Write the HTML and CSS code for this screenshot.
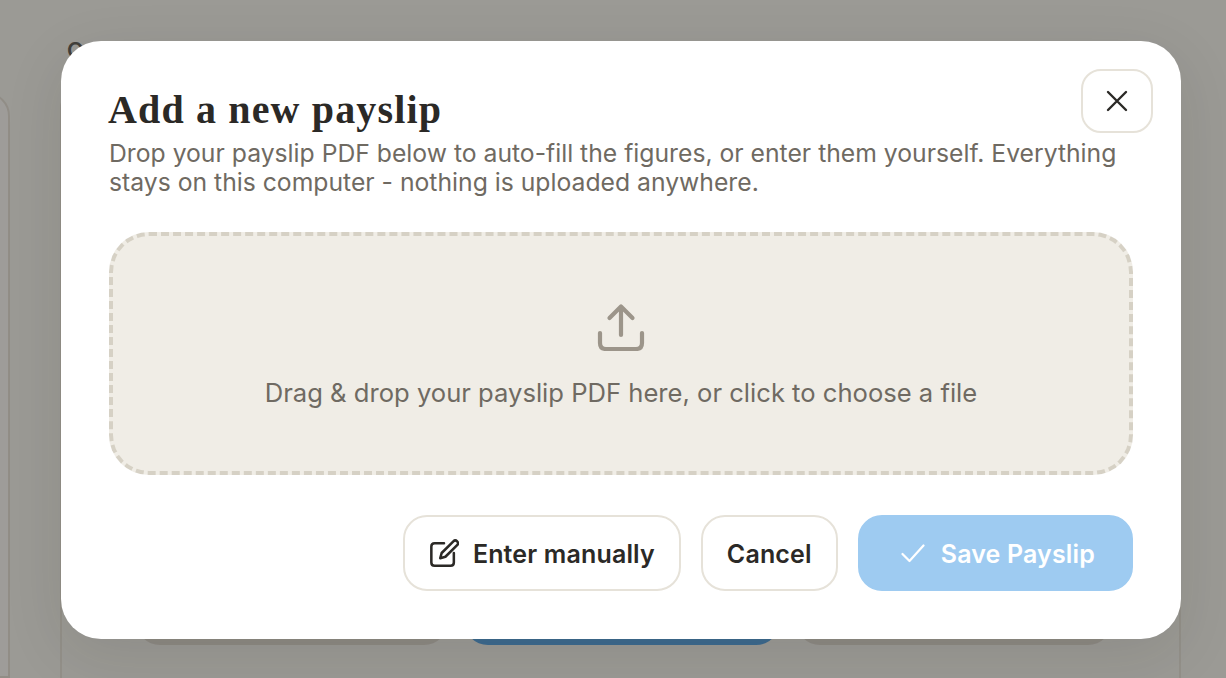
FILE: index.html
```html
<!DOCTYPE html>
<html lang="en">
<head>
<meta charset="utf-8">
<title>Add a new payslip</title>
<link rel="stylesheet" href="styles.css">
</head>
<body>
<div class="page" aria-hidden="true">
  <div class="side-card"></div>
  <div class="main">
    <div class="eyebrow">O</div>
    <div class="main-card">
      <div class="under-actions">
        <div class="under-btn"></div>
        <div class="under-btn primary"></div>
        <div class="under-btn"></div>
      </div>
    </div>
  </div>
</div>
<div class="overlay">
  <section class="modal">
    <button class="close" aria-label="Close">
      <svg width="24" height="24" viewBox="0 0 24 24" fill="none" stroke="#2b2926" stroke-width="2.4" stroke-linecap="round"><path d="M3 3 L21 21 M21 3 L3 21"/></svg>
    </button>
    <h1 class="title">Add a new payslip</h1>
    <p class="lead">Drop your payslip PDF below to auto-fill the figures, or enter them yourself. Everything stays on this computer - nothing is uploaded anywhere.</p>
    <div class="drop">
      <svg class="drop-icon" width="48" height="48" viewBox="0 0 48 48" fill="none" stroke="#9c958a" stroke-width="4.2" stroke-linecap="round" stroke-linejoin="round"><path d="M24 32 V4 M12.500 15 L24 3.500 L35.500 15"/><path d="M3 30 V40 Q3 46 9 46 H39 Q45 46 45 40 V30"/></svg>
      <p class="drop-text">Drag &amp; drop your payslip PDF here, or click to choose a file</p>
    </div>
    <div class="actions">
      <button class="btn">
        <svg width="30" height="30" viewBox="0 0 32 32" fill="none" stroke="#2b2926" stroke-width="2.700" stroke-linecap="round" stroke-linejoin="round"><path d="M16 5.500 H6 Q2.500 5.500 2.500 9 V26 Q2.500 29.500 6 29.500 H23 Q26.500 29.500 26.500 26 V16"/><path d="M26 3.500 Q28 1.500 30 3.500 Q32 5.500 30 7.500 L17.500 20 L12 21.500 L13.500 16 Z"/></svg>
        <span class="btn-label">Enter manually</span>
      </button>
      <button class="btn"><span class="btn-label">Cancel</span></button>
      <button class="btn primary">
        <svg width="24" height="20" viewBox="0 0 24 20" fill="none" stroke="#fff" stroke-width="2.200" stroke-linecap="round" stroke-linejoin="round"><path d="M1.500 11 L8.500 18 L22.500 2.500"/></svg>
        <span class="btn-label">Save Payslip</span>
      </button>
    </div>
  </section>
</div>
</body>
</html>
```
FILE: styles.css
```css
* { box-sizing: border-box; }
html, body { margin: 0; height: 100%; overflow: hidden; }
body {
  position: relative;
  width: 1226px;
  height: 678px;
  background: #ece9e2;
  font-family: Inter, "Liberation Sans", sans-serif;
}
.page {
  display: flex;
  height: 678px;
  overflow: hidden;
  background: #f8f7f3;
}
.side-card {
  flex: 0 0 40px;
  margin: 92px 0 0 -30px;
  background: #fdfcfa;
  border: 2px solid #e5e1d8;
  border-radius: 0 24px 0 0;
}
.main {
  flex: 1;
  padding: 36px 45px 0 50px;
  display: flex;
  flex-direction: column;
}
.eyebrow {
  height: 56px;
  padding-left: 7px;
  font-size: 22px;
  font-weight: 600;
  line-height: 28px;
  color: #55524d;
}
.main-card {
  flex: 1;
  border: 2px solid #e9e5dc;
  border-bottom: 0;
  border-radius: 16px 16px 0 0;
  padding: 0 67px 0 74px;
}
.under-actions {
  margin-top: 501px;
  display: grid;
  grid-template-columns: 312px 316px 316px;
  gap: 16px;
}
.under-btn {
  height: 50px;
  background: #dfdad2;
  border-radius: 24px;
}
.under-btn.primary { background: #4ca0e7; }
.overlay {
  position: absolute;
  inset: 0;
  background: rgba(42, 40, 36, 0.45);
}
.modal {
  position: absolute;
  left: 61px;
  top: 41px;
  width: 1120px;
  height: 598px;
  padding: 48px;
  background: #fff;
  border-radius: 40px;
  box-shadow: 0 16px 60px rgba(30, 28, 24, 0.1);
}
.close {
  position: absolute;
  top: 28px;
  right: 28px;
  width: 72px;
  height: 64px;
  display: flex;
  align-items: center;
  justify-content: center;
  padding: 0;
  background: #fff;
  border: 2px solid #e6e2d9;
  border-radius: 20px;
}
.title {
  margin: 0 0 0 -1px;
  font-family: "Liberation Serif", serif;
  font-size: 40px;
  font-weight: 700;
  letter-spacing: 1.15px;
  line-height: 42px;
  color: #2b2926;
}
.lead {
  margin: 8px 0 0;
  width: 1020px;
  font-size: 24.72px;
  line-height: 29px;
  color: #6f6a62;
}
.drop {
  margin-top: 35px;
  height: 243px;
  display: flex;
  flex-direction: column;
  align-items: center;
  background: #f0ede6;
  border: 4px dashed #d6d1c5;
  border-radius: 40px;
  padding-top: 67px;
}
.drop-icon { display: block; }
.drop-text {
  margin: 26px 0 0;
  font-size: 25.6px;
  line-height: 32px;
  color: #6f6a62;
}
.actions {
  margin-top: 40px;
  display: flex;
  justify-content: flex-end;
  gap: 20px;
}
.btn {
  height: 76px;
  display: flex;
  align-items: center;
  gap: 14px;
  padding: 0 24px;
  background: #fff;
  border: 2px solid #e6e2d9;
  border-radius: 24px;
  font-family: inherit;
  font-size: 25px;
  font-weight: 600;
  letter-spacing: 0.15px;
  line-height: 30px;
  color: #2b2926;
}
.btn-label { padding-top: 2px; }
.btn.primary {
  gap: 16px;
  padding: 0 36px 0 41px;
  background: #9ecbf1;
  border-color: #9ecbf1;
  color: #fff;
}
```
